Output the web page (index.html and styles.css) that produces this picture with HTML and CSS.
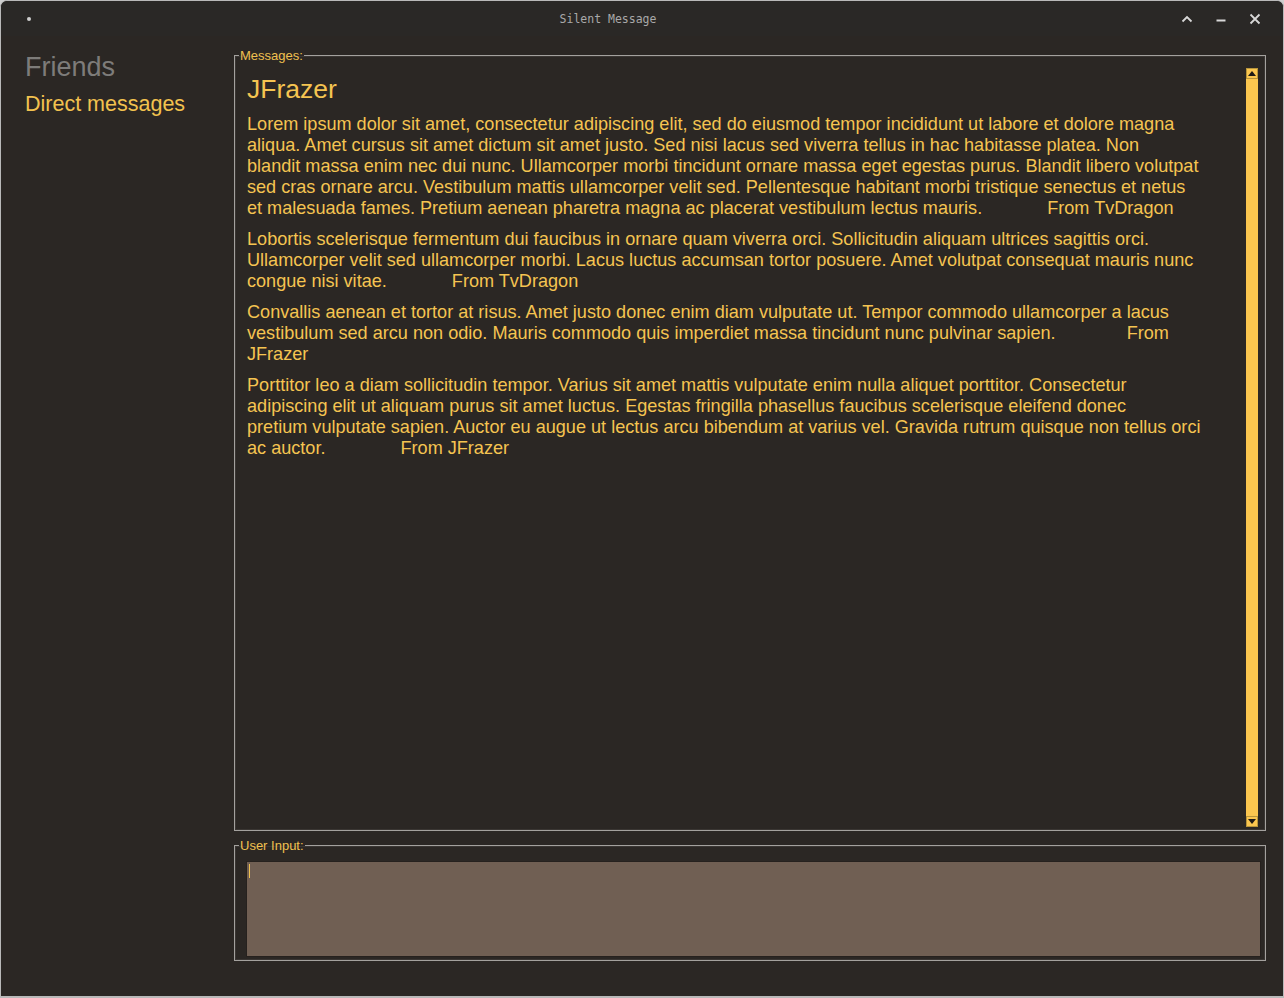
FILE: index.html
```html
<!DOCTYPE html>
<html>
<head>
<meta charset="utf-8">
<title>Silent Message</title>
<link rel="stylesheet" href="styles.css">
</head>
<body>
<div class="window">
  <div class="titlebar">
    <span class="dot"></span>
    <span class="title">Silent Message</span>
    <div class="controls">
      <svg class="ctl" width="14" height="14" viewBox="0 0 14 14"><path d="M2.5 9.5 L7 5 L11.5 9.5" fill="none" stroke="#d8d8d8" stroke-width="1.8"/></svg>
      <svg class="ctl" width="14" height="14" viewBox="0 0 14 14"><path d="M2.5 8.5 H11.5" fill="none" stroke="#d8d8d8" stroke-width="1.8"/></svg>
      <svg class="ctl" width="14" height="14" viewBox="0 0 14 14"><path d="M2.5 2.5 L11.5 11.5 M11.5 2.5 L2.5 11.5" fill="none" stroke="#d8d8d8" stroke-width="1.8"/></svg>
    </div>
  </div>
  <div class="body">
    <aside class="sidebar">
      <div class="friends">Friends</div>
      <div class="dm">Direct messages</div>
    </aside>
    <main class="main">
      <fieldset class="box messages">
        <legend>Messages:</legend>
        <div class="msg-row">
          <div class="msg-content">
            <h1 class="chat-name">JFrazer</h1>
            <p class="msg">Lorem ipsum dolor sit amet, consectetur adipiscing elit, sed do eiusmod tempor incididunt ut labore et dolore magna aliqua. Amet cursus sit amet dictum sit amet justo. Sed nisi lacus sed viverra tellus in hac habitasse platea. Non<br>blandit massa enim nec dui nunc. Ullamcorper morbi tincidunt ornare massa eget egestas purus. Blandit libero volutpat sed cras ornare arcu. Vestibulum mattis ullamcorper velit sed. Pellentesque habitant morbi tristique senectus et netus et malesuada fames. Pretium aenean pharetra magna ac placerat vestibulum lectus mauris. <span class="from">From TvDragon</span></p>
            <p class="msg">Lobortis scelerisque fermentum dui faucibus in ornare quam viverra orci. Sollicitudin aliquam ultrices sagittis orci. Ullamcorper velit sed ullamcorper morbi. Lacus luctus accumsan tortor posuere. Amet volutpat consequat mauris nunc congue nisi vitae. <span class="from">From TvDragon</span></p>
            <p class="msg">Convallis aenean et tortor at risus. Amet justo donec enim diam vulputate ut. Tempor commodo ullamcorper a lacus vestibulum sed arcu non odio. Mauris commodo quis imperdiet massa tincidunt nunc pulvinar sapien. <span class="from from-wide">From JFrazer</span></p>
            <p class="msg">Porttitor leo a diam sollicitudin tempor. Varius sit amet mattis vulputate enim nulla aliquet porttitor. Consectetur adipiscing elit ut aliquam purus sit amet luctus. Egestas fringilla phasellus faucibus scelerisque eleifend donec<br>pretium vulputate sapien. Auctor eu augue ut lectus arcu bibendum at varius vel. Gravida rutrum quisque non tellus orci ac auctor. <span class="from from-wider">From JFrazer</span></p>
          </div>
          <div class="scrollbar">
            <div class="sb-btn"><span class="tri-up"></span></div>
            <div class="sb-track"></div>
            <div class="sb-btn"><span class="tri-down"></span></div>
          </div>
        </div>
      </fieldset>
      <fieldset class="box input">
        <legend>User Input:</legend>
        <div class="textarea"><span class="caret"></span></div>
      </fieldset>
    </main>
  </div>
</div>
</body>
</html>
```

FILE: styles.css
```css
html, body {
  margin: 0;
  padding: 0;
  background: #cfcfcf;
}
body {
  width: 1284px;
  height: 998px;
  overflow: hidden;
  font-family: "Liberation Sans", Arial, sans-serif;
}
.window {
  box-sizing: border-box;
  width: 1284px;
  height: 998px;
  border: 1px solid #b9b9b9;
  border-bottom-width: 2px;
  border-radius: 7px 7px 0 0;
  background: #2b2724;
  display: flex;
  flex-direction: column;
  overflow: hidden;
}
.titlebar {
  height: 35px;
  flex: none;
  background: #2a2826;
  display: flex;
  align-items: center;
  position: relative;
}
.dot {
  width: 4px;
  height: 4px;
  border-radius: 50%;
  background: #cfcfcf;
  margin-left: 26px;
}
.title {
  position: absolute;
  left: 0;
  right: 0;
  top: 11px;
  text-align: center;
  margin-left: -68px;
  font-family: "DejaVu Sans Mono", monospace;
  font-size: 11.5px;
  color: #a9a9a9;
  pointer-events: none;
}
.controls {
  margin-left: auto;
  margin-right: 21px;
  display: flex;
  gap: 20px;
  align-items: center;
}
.ctl {
  display: block;
}
.body {
  flex: 1;
  display: flex;
  min-height: 0;
}
.sidebar {
  width: 233px;
  flex: none;
  padding: 16px 0 0 24px;
  box-sizing: border-box;
}
.friends {
  font-size: 27px;
  color: #7e7c7a;
  line-height: 30px;
}
.dm {
  font-size: 21.5px;
  color: #f2c24f;
  line-height: 26px;
  margin-top: 9px;
}
.main {
  flex: 1;
  display: flex;
  flex-direction: column;
  padding: 12px 17px 35px 0;
  min-width: 0;
}
.box {
  margin: 0;
  padding: 0;
  min-width: 0;
  border: 1px solid #a4a19e;
  box-shadow: inset 0 0 0 1px #3a3633;
}
.box legend {
  margin-left: 4px;
  padding: 0 1px;
  font-size: 13px;
  line-height: 15px;
  color: #f0c04f;
}
.messages {
  flex: 1;
  min-height: 0;
  display: flex;
}
.msg-row {
  flex: 1;
  display: flex;
  min-height: 0;
}
.msg-content {
  flex: 1;
  padding: 0 41px 0 12px;
  color: #f5c451;
  min-width: 0;
}
.chat-name {
  margin: 10px 0 9px;
  font-weight: normal;
  font-size: 26.5px;
  line-height: 32px;
}
.msg {
  margin: 0 0 10px;
  font-size: 18.1px;
  line-height: 21px;
}
.from {
  margin-left: 60px;
}
.from-wide {
  margin-left: 66px;
}
.from-wider {
  margin-left: 70px;
}
.scrollbar {
  width: 12px;
  flex: none;
  margin: 5px 7px 3px 0;
  display: flex;
  flex-direction: column;
  background: #fbc64f;
}
.sb-btn {
  height: 11px;
  flex: none;
  box-sizing: border-box;
  border: 1px solid #b8953b;
  background: #fbc64f;
  display: flex;
  align-items: center;
  justify-content: center;
}
.sb-track {
  flex: 1;
  background: #fbc64f;
}
.tri-up {
  width: 0;
  height: 0;
  border-left: 4px solid transparent;
  border-right: 4px solid transparent;
  border-bottom: 5px solid #1e1a16;
}
.tri-down {
  width: 0;
  height: 0;
  border-left: 4px solid transparent;
  border-right: 4px solid transparent;
  border-top: 5px solid #1e1a16;
}
.input {
  flex: none;
  height: 123px;
  margin-top: 7px;
  box-sizing: border-box;
  display: block;
}
.textarea {
  height: 96px;
  margin: 8px 4px 0 11px;
  box-sizing: border-box;
  background: #705f53;
  border: 1px solid #26211e;
  position: relative;
}
.caret {
  position: absolute;
  left: 2px;
  top: 2px;
  width: 1px;
  height: 14px;
  background: #f2c24f;
}
```
